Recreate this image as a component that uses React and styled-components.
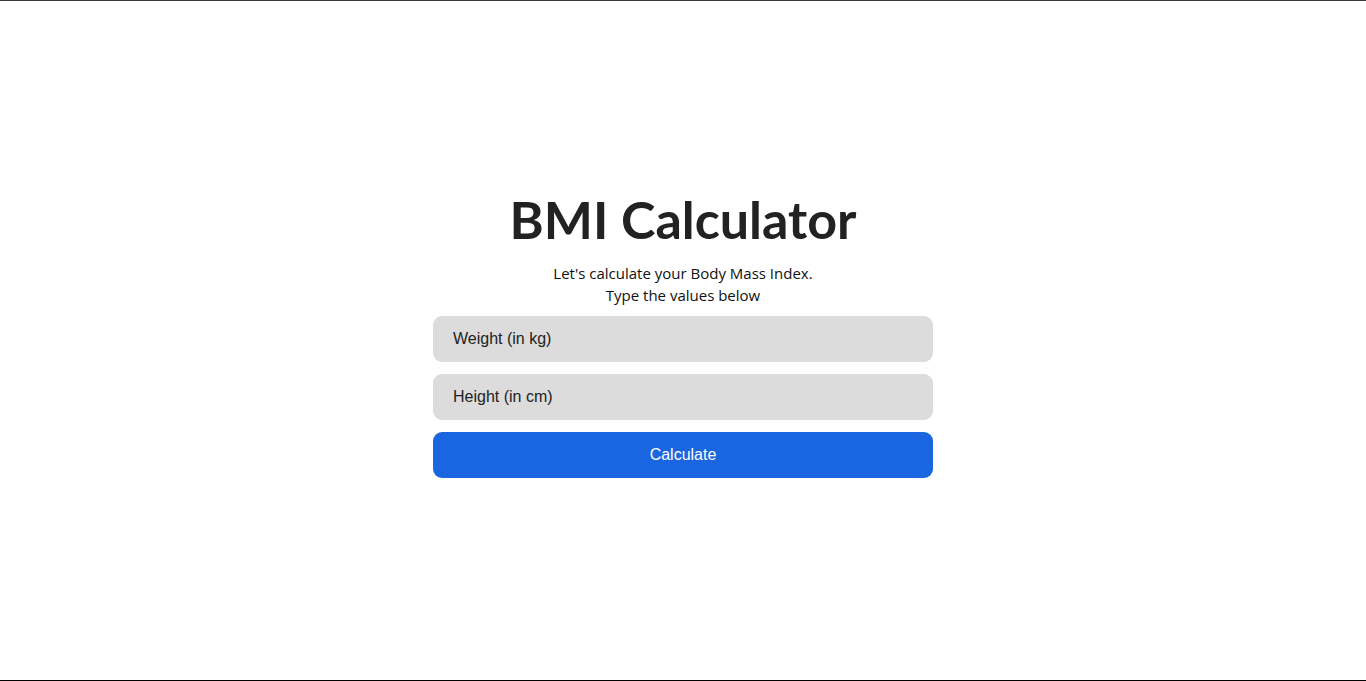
import React from "react";
import styled, { createGlobalStyle } from "styled-components";

const Global = createGlobalStyle`
  html, body { margin: 0; padding: 0; background: #fff; }
  * { box-sizing: border-box; }
`;

const Page = styled.main`
  height: 681px;
  border-top: 1px solid #3c3c3c;
  border-bottom: 1px solid #000;
  display: flex;
  flex-direction: column;
  align-items: center;
  padding-top: 186px;
  font-family: "Open Sans", "Noto Sans", sans-serif;
`;

const Title = styled.h1`
  margin: 0;
  font-family: Lato, "Open Sans", sans-serif;
  font-size: 52px;
  line-height: 64px;
  font-weight: 700;
  color: #222;
`;

const Subtitle = styled.p`
  margin: 11px 0 10px;
  font-size: 15px;
  line-height: 22px;
  text-align: center;
  color: #111;
`;

const Form = styled.form`
  width: 500px;
  display: flex;
  flex-direction: column;
  gap: 12px;
`;

const Field = styled.input`
  height: 46px;
  border: none;
  border-radius: 9px;
  background: #dcdcdc;
  padding: 0 20px;
  font-family: "Liberation Sans", Arial, sans-serif;
  font-size: 16px;
  color: #222;
  outline: none;
  &::placeholder { color: #222; }
`;

const Button = styled.button`
  height: 46px;
  border: none;
  border-radius: 9px;
  background: #1a65e0;
  color: #fff;
  font-family: "Liberation Sans", Arial, sans-serif;
  font-size: 16px;
  cursor: pointer;
`;

export default function App() {
  return (
    <>
      <Global />
      <Page>
        <Title>BMI Calculator</Title>
        <Subtitle>
          Let's calculate your Body Mass Index.
          <br />
          Type the values below
        </Subtitle>
        <Form onSubmit={(e) => e.preventDefault()}>
          <Field type="number" placeholder="Weight (in kg)" />
          <Field type="number" placeholder="Height (in cm)" />
          <Button type="submit">Calculate</Button>
        </Form>
      </Page>
    </>
  );
}
